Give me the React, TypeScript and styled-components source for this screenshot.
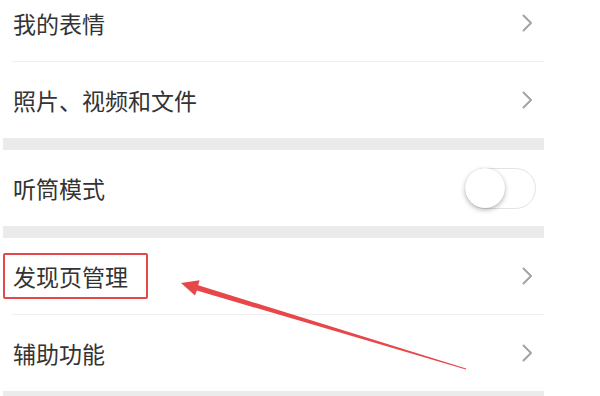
import React from "react";
import styled, { createGlobalStyle } from "styled-components";

const GlobalStyle = createGlobalStyle`
  html, body {
    margin: 0;
    padding: 0;
    background: #ffffff;
  }
  body {
    font-family: "Noto Sans CJK SC", "Noto Sans", sans-serif;
  }
`;

const Page = styled.div`
  position: relative;
  width: 600px;
  height: 396px;
  overflow: hidden;
  background: #ffffff;
`;

const Panel = styled.div`
  display: flex;
  flex-direction: column;
  width: 541px;
  margin-left: 3px;
  margin-top: -15px;
  background: #ffffff;
`;

const Row = styled.div`
  display: flex;
  align-items: center;
  justify-content: space-between;
  height: 76px;
  padding-left: 10px;
  padding-right: ${(p: { $pr?: number }) => (p.$pr ?? 11)}px;
  box-sizing: border-box;
`;

const Label = styled.span<{ $highlight?: boolean }>`
  position: relative;
  font-size: 23px;
  line-height: 26px;
  color: #333333;
  letter-spacing: 0;
  &::after {
    content: "";
    display: ${(p) => (p.$highlight ? "block" : "none")};
    position: absolute;
    left: -10px;
    right: -20px;
    top: -10px;
    bottom: -10px;
    border: 2px solid #e5484a;
    border-radius: 2px;
  }
`;

const Divider = styled.div`
  height: 1px;
  margin-left: 9px;
  background: #efefef;
`;

const Band = styled.div<{ $h?: number }>`
  height: ${(p) => p.$h ?? 12}px;
  background: #ebebeb;
`;

const Toggle = styled.div`
  position: relative;
  width: 71px;
  height: 41px;
  box-sizing: border-box;
  border: 1.5px solid #e3e3e3;
  border-radius: 21px;
  background: #ffffff;
`;

const Knob = styled.div`
  position: absolute;
  left: -1px;
  top: -1px;
  width: 40px;
  height: 40px;
  border-radius: 50%;
  background: #ffffff;
  box-shadow: 0 2px 5px rgba(0, 0, 0, 0.28), 0 0 1px rgba(0, 0, 0, 0.15);
`;

const ArrowLayer = styled.svg`
  position: absolute;
  left: 0;
  top: 0;
  pointer-events: none;
`;

const Chevron = () => (
  <svg width="11" height="18" viewBox="0 0 11 18" fill="none">
    <path d="M1.5 1.5 L9 9 L1.5 16.5" stroke="#a3a3a3" strokeWidth="2" strokeLinecap="round" strokeLinejoin="round" />
  </svg>
);

export default function App() {
  return (
    <Page>
      <GlobalStyle />
      <Panel>
        <Row>
          <Label>我的表情</Label>
          <Chevron />
        </Row>
        <Divider />
        <Row>
          <Label>照片、视频和文件</Label>
          <Chevron />
        </Row>
        <Band />
        <Row $pr={8}>
          <Label>听筒模式</Label>
          <Toggle>
            <Knob />
          </Toggle>
        </Row>
        <Band />
        <Row>
          <Label $highlight>发现页管理</Label>
          <Chevron />
        </Row>
        <Divider />
        <Row>
          <Label>辅助功能</Label>
          <Chevron />
        </Row>
        <Band $h={10} />
      </Panel>
      <ArrowLayer width="600" height="396" viewBox="0 0 600 396">
        <polygon
          points="181,283 199.6,280.2 198.2,285.3 466.1,368.4 465.9,369.6 196.8,290.5 195,295.6"
          fill="#e8474a"
        />
      </ArrowLayer>
    </Page>
  );
}
